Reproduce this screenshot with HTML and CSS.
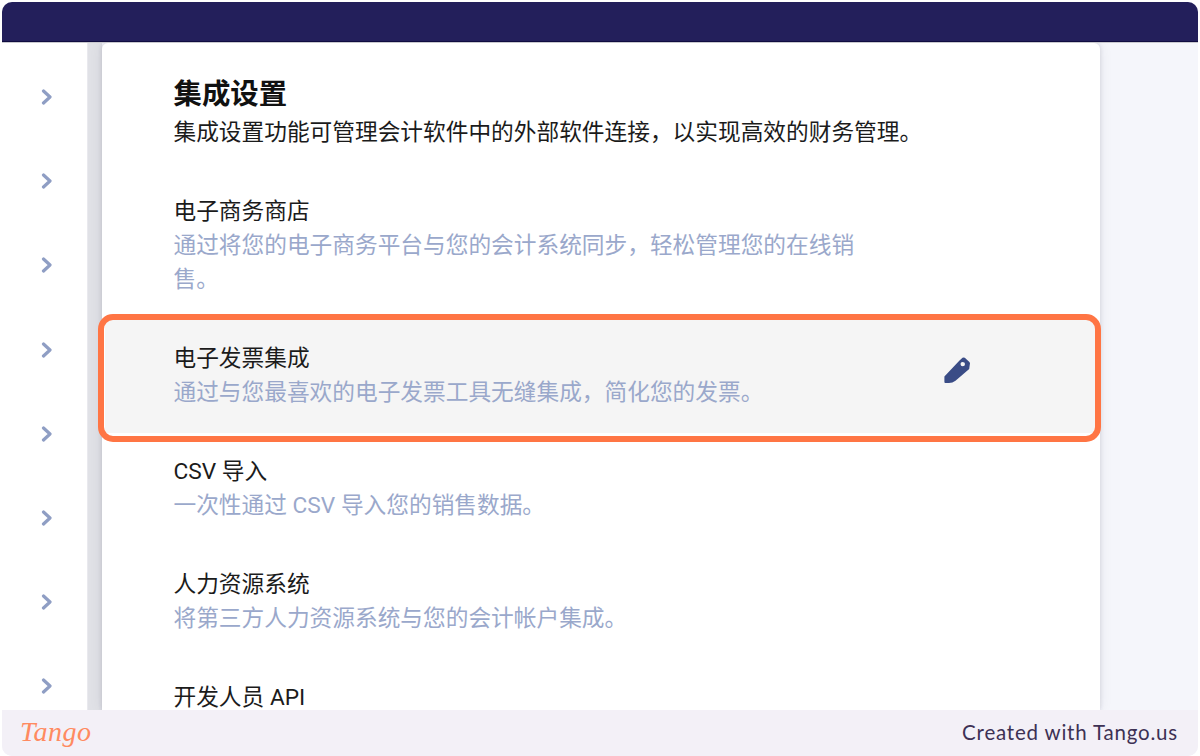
FILE: index.html
```html
<!DOCTYPE html>
<html lang="zh">
<head>
    <meta charset="UTF-8">
    <meta name="viewport" content="width=device-width, initial-scale=1.0">
    <title>集成设置</title>
    <link rel="stylesheet" href="styles.css">
</head>
<body>
    <div class="frame">
        <div class="topbar"></div>
        <div class="main">
            <!-- 左侧折叠菜单 -->
            <nav class="side">
                <svg class="chev" viewBox="0 0 12 16"><path d="M2.5 2l6.5 6-6.5 6"/></svg>
                <svg class="chev" viewBox="0 0 12 16"><path d="M2.5 2l6.5 6-6.5 6"/></svg>
                <svg class="chev" viewBox="0 0 12 16"><path d="M2.5 2l6.5 6-6.5 6"/></svg>
                <svg class="chev" viewBox="0 0 12 16"><path d="M2.5 2l6.5 6-6.5 6"/></svg>
                <svg class="chev" viewBox="0 0 12 16"><path d="M2.5 2l6.5 6-6.5 6"/></svg>
                <svg class="chev" viewBox="0 0 12 16"><path d="M2.5 2l6.5 6-6.5 6"/></svg>
                <svg class="chev" viewBox="0 0 12 16"><path d="M2.5 2l6.5 6-6.5 6"/></svg>
                <svg class="chev" viewBox="0 0 12 16"><path d="M2.5 2l6.5 6-6.5 6"/></svg>
            </nav>

            <div class="card">
                <div class="head">
                    <h1>集成设置</h1>
                    <p>集成设置功能可管理会计软件中的外部软件连接，以实现高效的财务管理。</p>
                </div>

                <div class="row">
                    <h2>电子商务商店</h2>
                    <p>通过将您的电子商务平台与您的会计系统同步，轻松管理您的在线销售。</p>
                </div>
                <div class="row row-active">
                    <h2>电子发票集成</h2>
                    <p>通过与您最喜欢的电子发票工具无缝集成，简化您的发票。</p>
                    <svg class="pencil" viewBox="0 0 26 27">
                        <path fill-rule="evenodd" d="M.4 25V19.5L15.5 3.5 18.5.8Q19.6 0 20.8.8L25.4 5Q26.3 6 25.8 7.6L25.2 12 11.5 23.7Q8.5 26 5 26H1.3Q.4 26 .4 25ZM16.5 7Q16.5 5 18.5 5 21 5 21 7 21 9.2 18.7 9.2 16.5 9.2 16.5 7Z"/>
                    </svg>
                    <div class="mark"></div>
                </div>
                <div class="row">
                    <h2>CSV 导入</h2>
                    <p>一次性通过 CSV 导入您的销售数据。</p>
                </div>
                <div class="row">
                    <h2>人力资源系统</h2>
                    <p>将第三方人力资源系统与您的会计帐户集成。</p>
                </div>
                <div class="row">
                    <h2>开发人员 API</h2>
                </div>
            </div>
        </div>
        <footer class="foot">
            <span class="logo">Tango</span>
            <span class="credit">Created with Tango.us</span>
        </footer>
    </div>
</body>
</html>
```

FILE: styles.css
```css
* {
    box-sizing: border-box;
}
html, body {
    margin: 0;
    background: #fff;
}
body {
    font-family: "Roboto", "Noto Sans CJK SC", sans-serif;
    height: 756px;
    overflow: hidden;
    padding: 2px 2px 0;
}
.frame {
    height: 754px;
    display: flex;
    flex-direction: column;
    border-radius: 10px;
    overflow: hidden;
    background: #f5f6fb;
}
.topbar {
    height: 40px;
    flex: none;
    position: relative;
    z-index: 1;
    background: #231f5b;
    border-bottom: 1px solid #100c40;
    box-shadow: 0 1px 0 #c9c9cf;
}
.main {
    flex: 1;
    min-height: 0;
    display: flex;
    overflow: hidden;
    background: linear-gradient(to right, #fff 86px, #e0e1e6 86px, #e0e1e6 100px, #f5f6fb 100px);
}

/* side */
.side {
    width: 86px;
    flex: none;
    padding: 47px 0 0 5px;
    background: #fff;
    border-right: 1px solid #e9e9ee;
    display: flex;
    flex-direction: column;
    align-items: center;
    gap: 68.2px;
}
.chev {
    width: 12px;
    height: 16px;
    flex: none;
}
.chev path {
    fill: none;
    stroke: #8f9ec4;
    stroke-width: 3.2;
    stroke-linecap: round;
    stroke-linejoin: round;
}

/* card */
.card {
    width: 998px;
    flex: none;
    margin: 1px 0 0 14px;
    background: #fff;
    border-radius: 6px 6px 0 0;
    box-shadow: 0 0 4px rgba(40, 40, 70, 0.16), 0 0 14px rgba(40, 40, 70, 0.08);
    padding-top: 32px;
}
.head {
    padding: 0 71.5px;
    margin-bottom: 22px;
}
h1 {
    margin: 0;
    font-size: 28.4px;
    line-height: 40px;
    font-weight: 700;
    color: #111;
}
.head p {
    margin: 0;
    font-size: 22.7px;
    line-height: 36px;
    color: #1b1b1b;
}
.row {
    position: relative;
    padding: 21px 71.5px 23px;
}
.row h2 {
    margin: 0;
    font-size: 22.7px;
    line-height: 35px;
    font-weight: 400;
    color: #1b1b1b;
}
.row p {
    margin: 0;
    max-width: 690px;
    font-size: 22.7px;
    line-height: 34px;
    color: #9aa8cb;
}
.row-active {
    background: #f5f5f5;
    margin: 0 5px 0 3px;
    padding-left: 68.5px;
}

/* 标注框 */
.mark {
    position: absolute;
    inset: -6px -6px -9px -7px;
    border: 6px solid #ff7544;
    border-radius: 15px;
}
.pencil {
    position: absolute;
    right: 125px;
    top: 37px;
    width: 26px;
    height: 27px;
    fill: #3a4c86;
}

/* footer */
.foot {
    height: 46px;
    flex: none;
    background: #f3f0f7;
    display: flex;
    align-items: center;
    justify-content: space-between;
    padding: 0 20px 2px 18px;
    position: relative;
}
.logo {
    font-family: "Liberation Serif", serif;
    font-style: italic;
    font-size: 28px;
    letter-spacing: 0.5px;
    color: #ff8a60;
}
.credit {
    font-family: "Lato", sans-serif;
    font-size: 20.5px;
    letter-spacing: 0.8px;
    color: #3d3154;
}
```
